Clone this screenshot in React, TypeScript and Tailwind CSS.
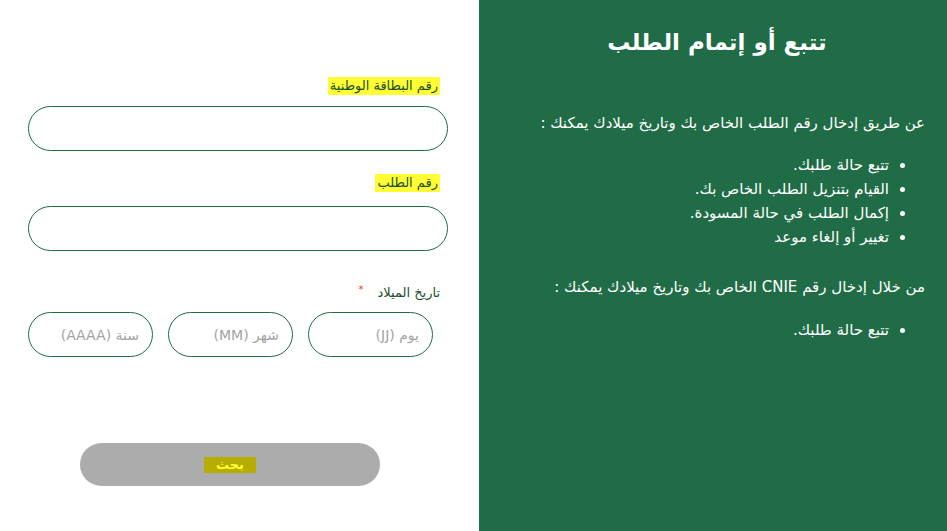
import React from 'react';

const font = { fontFamily: '"DejaVu Sans", "Noto Sans", sans-serif' };

const DateInput = ({ placeholder }: { placeholder: string }) => (
  <input
    dir="rtl"
    placeholder={placeholder}
    className="w-[125px] h-[45px] rounded-full border border-[#1f6b45] px-[13px] text-[14px] text-gray-700 placeholder:text-[#a3a3a3] outline-none bg-white"
  />
);

export default function App() {
  return (
    <div className="flex w-[947px] h-[531px] overflow-hidden" style={font}>
      <div className="w-[479px] h-full bg-white flex flex-col">
        <div className="flex flex-col pl-[28px] pr-[31px] pt-[77px]">
          <div className="flex justify-end pr-[8px]">
            <span className="bg-[#ffff33] text-[#1a4f2c] text-[13px] px-[2px] leading-[18px]">رقم البطاقة الوطنية</span>
          </div>
          <input dir="rtl" className="mt-[11px] h-[45px] rounded-full border border-[#1f6b45] outline-none px-5" />
          <div className="flex justify-end pr-[8px] mt-[23px]">
            <span className="bg-[#ffff33] text-[#1a4f2c] text-[13px] px-[2px] leading-[18px]">رقم الطلب</span>
          </div>
          <input dir="rtl" className="mt-[14px] h-[45px] rounded-full border border-[#1f6b45] outline-none px-5" />
          <div className="flex justify-end items-start pr-[8px] mt-[33px]">
            <span className="text-[#e53935] text-[10px] mr-[14px] leading-[12px]">*</span>
            <span className="text-[#1a4f2c] text-[13px] leading-[18px]">تاريخ الميلاد</span>
          </div>
          <div className="flex gap-[15px] mt-[10px]">
            <DateInput placeholder="سنة (AAAA)" />
            <DateInput placeholder="شهر (MM)" />
            <DateInput placeholder="يوم (JJ)" />
          </div>
        </div>
        <div className="pl-[80px] mt-[86px]">
          <button className="w-[300px] h-[43px] rounded-full bg-[#acacac] flex items-center justify-center">
            <span className="bg-[#b6ad00] text-[#ffff33] text-[13px] font-bold px-[12px] leading-[16px]">بحث</span>
          </button>
        </div>
      </div>
      <div dir="rtl" className="flex-1 h-full bg-[#206c46] text-white pr-[22px] pl-[10px]">
        <h1 className="text-center text-[23px] font-bold mt-[24px] leading-[36px] pl-[20px]">تتبع أو إتمام الطلب</h1>
        <p className="mt-[52px] text-[15px] leading-[22px]">عن طريق إدخال رقم الطلب الخاص بك وتاريخ ميلادك يمكنك :</p>
        <ul className="mt-[19px] pr-[36px] list-disc text-[15px] leading-[24px]">
          <li>تتبع حالة طلبك.</li>
          <li>القيام بتنزيل الطلب الخاص بك.</li>
          <li>إكمال الطلب في حالة المسودة.</li>
          <li>تغيير أو إلغاء موعد</li>
        </ul>
        <p className="mt-[27px] text-[15px] leading-[22px]">من خلال إدخال رقم CNIE الخاص بك وتاريخ ميلادك يمكنك :</p>
        <ul className="mt-[20px] pr-[36px] list-disc text-[15px] leading-[24px]">
          <li>تتبع حالة طلبك.</li>
        </ul>
      </div>
    </div>
  );
}
